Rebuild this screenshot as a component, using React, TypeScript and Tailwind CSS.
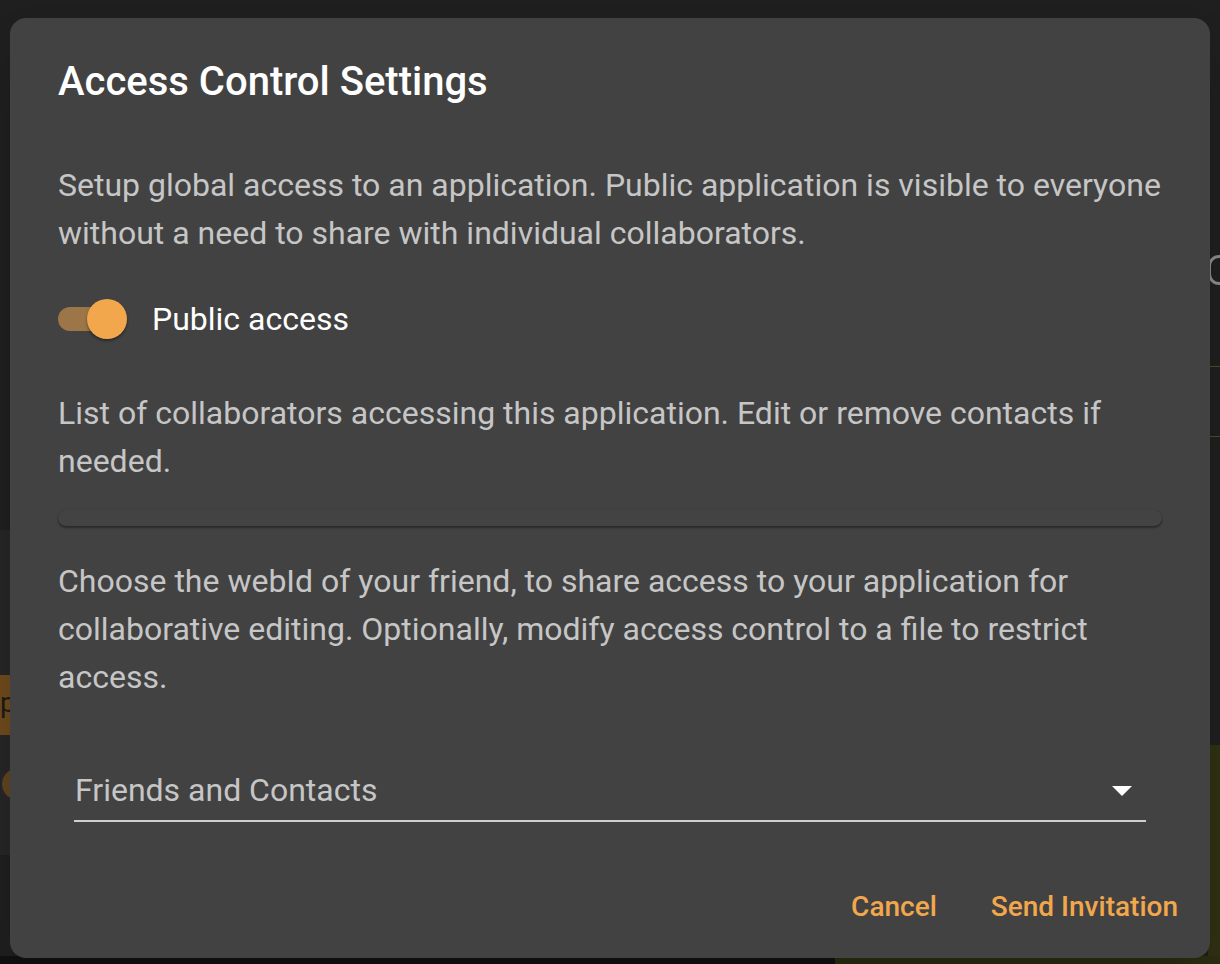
import { useState } from "react";

export default function App() {
    const [isPublic, setIsPublic] = useState(true);

    return (
        <div className="relative w-[1220px] h-[964px] overflow-hidden bg-[#1f1f1f] font-['Roboto','Liberation_Sans',sans-serif]">
            {/* page behind the backdrop, only the edges show */}
            <div className="absolute left-[1208px] top-[255px] w-[22px] h-[30px] rounded-full border-[3px] border-[#8a8a8a]"></div>
            <div className="absolute right-0 top-[366px] h-px w-[12px] bg-[#5a4526]"></div>
            <div className="absolute right-0 top-[436px] h-px w-[12px] bg-[#5a4526]"></div>
            <div className="absolute left-0 top-[530px] w-[12px] h-[325px] bg-[#262626]"></div>
            <div className="absolute left-0 top-[675px] w-[12px] h-[60px] bg-[#6e4a1c] text-[28px] leading-[56px] text-[#1a1a1a]">
                p
            </div>
            <div className="absolute left-[2px] top-[768px] w-[32px] h-[32px] rounded-full bg-[#5d4322]"></div>
            <div className="absolute left-0 right-0 bottom-0 h-[8px] bg-[#111111]"></div>
            <div className="absolute right-0 top-[745px] w-[12px] h-[219px] bg-[#2f3012]"></div>
            <div className="absolute left-[835px] right-0 bottom-0 h-[8px] bg-[#2c2d10]"></div>

            {/* dialog */}
            <div className="absolute left-[10px] top-[18px] w-[1200px] h-[940px] rounded-[16px] bg-[#424242] shadow-2xl flex flex-col">
                <h2 className="pt-8 px-12 pb-8 text-[40px] leading-[64px] font-medium text-white">
                    Access Control Settings
                </h2>

                <div className="px-12 pt-[15px] flex flex-col">
                    <p className="text-[32px] leading-[48px] text-[#c6c6c6]">
                        Setup global access to an application. Public application is visible to everyone without a need to share with individual collaborators.
                    </p>

                    <label className="mt-6 h-[76px] flex items-center cursor-pointer" onClick={() => setIsPublic(!isPublic)}>
                        <span className="relative w-[70px] h-[40px] flex items-center">
                            <span className={`block w-[58px] h-[24px] rounded-full ${isPublic ? "bg-[#9c7648]" : "bg-[#7a7a7a]"}`}></span>
                            <span
                                className={`absolute top-0 w-[40px] h-[40px] rounded-full shadow-[0_2px_3px_rgba(0,0,0,0.4)] ${
                                    isPublic ? "left-[29px] bg-[#f2a74d]" : "left-[-6px] bg-[#e0e0e0]"
                                }`}
                            ></span>
                        </span>
                        <span className="ml-[24px] text-[32px] leading-[48px] text-white">Public access</span>
                    </label>

                    <p className="mt-8 text-[32px] leading-[48px] text-[#c6c6c6]">
                        List of collaborators accessing this application. Edit or remove contacts if needed.
                    </p>

                    <div className="mt-[25px] h-[16px] rounded-[8px] bg-[#434343] shadow-[0_2px_2px_rgba(0,0,0,0.35),0_0_1px_rgba(0,0,0,0.3)]"></div>

                    <p className="mt-[31px] text-[32px] leading-[48px] text-[#c6c6c6]">
                        Choose the webId of your friend, to share access to your application for collaborative editing. Optionally, modify access control to a file to restrict access.
                    </p>

                    <div className="mt-[59px] mx-4 flex items-center h-[62px] border-b-2 border-[#cfcfcf]">
                        <span className="flex-1 pl-[1px] text-[32px] leading-[48px] text-[#c6c6c6]">Friends and Contacts</span>
                        <svg width="20" height="10" viewBox="0 0 20 10" className="mr-[14px] mt-[2px]">
                            <path d="M0 0 L20 0 L10 10 Z" fill="#ffffff" />
                        </svg>
                    </div>
                </div>

                <div className="mt-auto px-4 pb-[15px] flex justify-end items-center gap-[22px]">
                    <button className="px-4 h-[72px] text-[28px] font-medium text-[#f2a74d] rounded-lg">Cancel</button>
                    <button className="px-4 h-[72px] text-[28px] font-medium text-[#f2a74d] rounded-lg">Send Invitation</button>
                </div>
            </div>
        </div>
    );
}
